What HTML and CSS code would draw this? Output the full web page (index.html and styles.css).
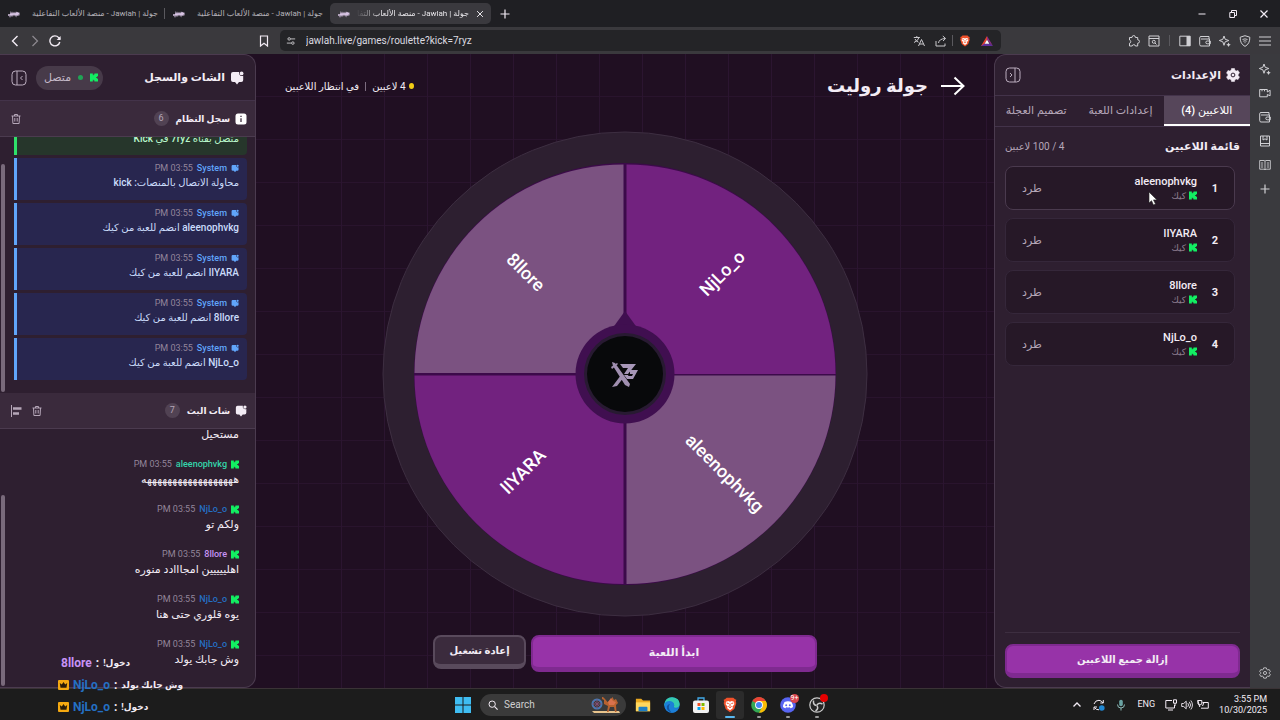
FILE: index.html
```html
<!DOCTYPE html>
<html lang="ar">
<head>
  <meta charset="UTF-8" />
  <meta name="viewport" content="width=device-width, initial-scale=1.0" />
  <title>جولة | Jawlah - منصة الألعاب التفاعلية</title>
  <link rel="stylesheet" href="styles.css">
</head>
<body>

<!-- icons -->
<svg class="sprite" aria-hidden="true">
  <symbol id="i-logo" viewBox="0 0 12 8"><path d="M0 5h2.500l.5-2 1 2.500L5 3l1 2 1-2 1 2.500L9 2l.5 3L11.500 4.500M1.500 6.500l1 .5M9.500 3l2 .5" fill="none" stroke="currentColor" stroke-width="1.300"/></symbol>
  <symbol id="i-kick" viewBox="0 0 9 9"><path d="M0 0h3.200v2H4V1h1V0h4v3H8v1H7v1h1v1h1v3H5V8H4V7h-.8v2H0z" fill="#12ee62"/></symbol>
  <symbol id="i-chat" viewBox="0 0 14 14"><path d="M3 1h6.200a3 3 0 0 0 4 3.800V9a2 2 0 0 1-2 2H9l-2 2.500L5 11H3a2 2 0 0 1-2-2V3a2 2 0 0 1 2-2z" fill="currentColor"/><circle cx="11.600" cy="2.400" r="1.900" fill="currentColor"/></symbol>
  <symbol id="i-info" viewBox="0 0 12 12"><rect x=".5" y=".5" width="11" height="11" rx="2.500" fill="#fff"/><path d="M6 5.200v3.800M6 2.800v1.200" stroke="#3a2a3c" stroke-width="1.300"/></symbol>
  <symbol id="i-trash" viewBox="0 0 12 12"><path d="M1.500 3h9M4.500 3V1.500h3V3M2.500 3l.4 7.500h6.200L9.500 3M4.800 5v3.500M7.200 5v3.500" fill="none" stroke="currentColor" stroke-width="1"/></symbol>
  <symbol id="i-align" viewBox="0 0 12 12"><path d="M1.500 0v12" stroke="currentColor"/><path d="M3 3.500h8.500M3 8.500h6" stroke="currentColor" stroke-width="2.600"/></symbol>
  <symbol id="i-panel" viewBox="0 0 16 16"><rect x="1" y="1" width="14" height="14" rx="3.500" fill="none" stroke="currentColor"/><path d="M6 1v14M11.500 6l-2 2 2 2" fill="none" stroke="currentColor"/></symbol>
  <symbol id="i-panel-r" viewBox="0 0 16 16"><rect x="1" y="1" width="14" height="14" rx="3.500" fill="none" stroke="currentColor"/><path d="M10 1v14M5 6l2 2-2 2" fill="none" stroke="currentColor"/></symbol>
  <symbol id="i-gear" viewBox="0 0 14 14"><path d="M5.500.5h3l.4 1.800 1.300.7 1.800-.6 1.500 2.600L12.200 6.300v1.400l1.300 1.300-1.500 2.600-1.800-.6-1.300.7-.4 1.800h-3l-.4-1.800-1.300-.7-1.800.6L.5 9l1.300-1.300V6.300L.5 5 2 2.400l1.800.6 1.300-.7z" fill="currentColor" stroke="currentColor" stroke-linejoin="round" stroke-width=".5"/><circle cx="7" cy="7" r="1.900" fill="none" stroke="#2e1f30"/></symbol>
  <symbol id="i-gear-o" viewBox="0 0 14 14"><path d="M5.500 1h3l.5 1.700 1.200.7 1.700-.4 1.300 2.300L12 6.500v1l1.200 1.200-1.300 2.300-1.700-.4-1.200.7L8.500 13h-3L5 11.300l-1.200-.7-1.700.4L.8 8.700 2 7.500v-1L.8 5.300 2.100 3l1.700.4L5 2.700z" fill="none" stroke="currentColor" stroke-linejoin="round"/><circle cx="7" cy="7" r="1.800" fill="none" stroke="currentColor"/></symbol>
  <symbol id="i-arrow" viewBox="0 0 24 20"><path d="M0 10h22M13.500 1.500L22.500 10l-9 8.500" fill="none" stroke="currentColor" stroke-width="2"/></symbol>
  <symbol id="i-left" viewBox="0 0 12 12"><path d="M8.500 1l-5 5 5 5" fill="none" stroke="currentColor" stroke-width="1.400"/></symbol>
  <symbol id="i-right" viewBox="0 0 12 12"><path d="M3.500 1l5 5-5 5" fill="none" stroke="currentColor" stroke-width="1.200"/></symbol>
  <symbol id="i-reload" viewBox="0 0 12 12"><path d="M10.800 7A5 5 0 1 1 9.700 2.600L11 4" fill="none" stroke="currentColor" stroke-width="1.400"/><path d="M11.600 1v4h-4z" fill="currentColor"/></symbol>
  <symbol id="i-mark" viewBox="0 0 12 12"><path d="M2.500 1h7v10L6 8.200 2.500 11z" fill="none" stroke="currentColor" stroke-width="1.200"/></symbol>
  <symbol id="i-tune" viewBox="0 0 12 12"><g fill="none" stroke="currentColor" stroke-width="1.100"><circle cx="3.800" cy="3.500" r="1.500"/><circle cx="8.200" cy="8.500" r="1.500"/><path d="M5.500 3.500H11M1 8.500h5.500"/></g></symbol>
  <symbol id="i-translate" viewBox="0 0 12 12"><path d="M.8 2.500h6M3.800 1v1.500M6 2.500Q5 6 1 7.500M2 4q1.200 2.400 3.500 3.200M5.500 11L8.500 4.500l3 6.500M6.500 9h4" fill="none" stroke="currentColor"/></symbol>
  <symbol id="i-share" viewBox="0 0 12 12"><path d="M1 6v5h9V8.500M3.500 8Q4 4 10 3.500M7.800 1l2.800 2.500L8 6" fill="none" stroke="currentColor"/></symbol>
  <symbol id="i-brave" viewBox="0 0 24 24"><path d="M7 1h10l2.500 2.500 2 .5-.8 3 .8 2-3 9L12 23l-6.500-5-3-9 .8-2-.8-3 2-.5z" fill="#f0512b"/><path d="M6 7l3.500-1L12 7l2.500-1L18 7l.5 4-3 3.500 1 2L12 20l-4.500-3.500 1-2L5.500 11z" fill="#fff"/><path d="M7 9l3 .8M17 9l-3 .8M12 10v4M9.500 14L12 16l2.500-2" stroke="#f0512b" stroke-width="1.500" fill="none"/></symbol>
  <symbol id="i-bat" viewBox="0 0 12 12"><path d="M6 1L0 11h6L3.800 8.500 6 5z" fill="#e2412e"/><path d="M6 1l6 10-2.500-2L6 5z" fill="#8b2d86"/><path d="M0 11h12L8.800 8.500H3.600z" fill="#5d2f9a"/><path d="M6 4.800l2.400 3.900H3.600z" fill="#fff"/></symbol>
  <symbol id="i-puzzle" viewBox="0 0 12 12"><path d="M1.500 2.500H4q0-2 1.700-2t1.700 2h2.300v2.300q1.800 0 1.800 1.700T9.700 8.200v2.800H7.400q0-1.300-1.600-1.300T4.200 11H1.500V8.200q1.300-.2 1.300-1.500T1.500 5z" fill="none" stroke="currentColor"/></symbol>
  <symbol id="i-find" viewBox="0 0 12 12"><path d="M1 1h10v10H1zM1 3.500h10" fill="none" stroke="currentColor"/><circle cx="5.800" cy="6.800" r="1.500" fill="none" stroke="currentColor"/><path d="M7 8l1.500 1.500" stroke="currentColor"/></symbol>
  <symbol id="i-side" viewBox="0 0 12 12"><path d="M.8 1.200h10.400v9.600H.8z" fill="none" stroke="currentColor"/><path d="M7.500 1h3.700v10H7.500z" fill="currentColor"/></symbol>
  <symbol id="i-wallet" viewBox="0 0 12 12"><path d="M10 4V1.500H2q-1.300 0-1.300 1.300V9.500Q.7 11 2 11h8.500V4H2M11.300 6H8.200q-1.400 0-1.400 1.400t1.400 1.400h3.100z" fill="none" stroke="currentColor"/></symbol>
  <symbol id="i-leo" viewBox="0 0 12 12"><path d="M5 1l1.200 3.300L9.800 5.500 6.200 6.800 5 10.300 3.800 6.800.3 5.500l3.500-1.200z" fill="none" stroke="currentColor"/><path d="M9.500 7.500l.8 1.500 1.500.7-1.500.8-.8 1.500-.7-1.500-1.500-.8 1.500-.7z" fill="currentColor"/></symbol>
  <symbol id="i-shield" viewBox="0 0 12 12"><path d="M6 .7l4.800 1.500q.3 6.500-4.800 9.200Q.9 8.700 1.200 2.200z" fill="none" stroke="currentColor"/><path d="M3.500 4.500q2.500-1.300 5 0M4.300 6.200q1.700-.9 3.400 0M5.500 7.700h1" fill="none" stroke="currentColor" stroke-width=".9"/></symbol>
  <symbol id="i-menu" viewBox="0 0 12 12"><path d="M0 2h12M0 6h12M0 10h12" stroke="currentColor" stroke-width="1.200"/></symbol>
  <symbol id="i-cam" viewBox="0 0 12 12"><path d="M.7 2.500h7.600V5l2.800-1.800v5.600L8.300 7.500v2.300H.7zM3 2.500v1.800M5.500 2.500v1.800" fill="none" stroke="currentColor"/></symbol>
  <symbol id="i-book" viewBox="0 0 12 12"><path d="M1.500 1h9v10h-9zM1.500 8.500h9M4 1v4l2-1.200L8 5V1" fill="none" stroke="currentColor"/></symbol>
  <symbol id="i-read" viewBox="0 0 12 12"><path d="M.7 1.500h4.500L6 2.200l.8-.7h4.500v8.700H6.800L6 11l-.8-.8H.7zM6 2v9M2 4h2.200M2 6h2.200M2 8h2.200M7.800 4H10M7.800 6H10M7.800 8H10" fill="none" stroke="currentColor" stroke-width=".9"/></symbol>
  <symbol id="i-plus" viewBox="0 0 12 12"><path d="M6 1.500v9M1.500 6h9" stroke="currentColor" stroke-width="1.200"/></symbol>
  <symbol id="i-min" viewBox="0 0 12 12"><path d="M2.500 6h7" stroke="currentColor"/></symbol>
  <symbol id="i-max" viewBox="0 0 12 12"><path d="M2.800 4.500h4.700v5H2.800zM4.500 4.500v-2h5v5h-2" fill="none" stroke="currentColor"/></symbol>
  <symbol id="i-x" viewBox="0 0 12 12"><path d="M2.500 2.500l7 7M9.500 2.500l-7 7" stroke="currentColor" stroke-width="1.200"/></symbol>
  <symbol id="i-crown" viewBox="0 0 11 10"><rect width="11" height="10" rx="1" fill="#f5a911"/><path d="M1.800 3l2 1.500L5.500 2l1.700 2.500 2-1.500-.7 4.800h-6z" fill="#2a1c08"/></symbol>
  <symbol id="i-win" viewBox="0 0 16 16"><path d="M0 0h7.500v7.500H0zM8.500 0H16v7.500H8.500zM0 8.500h7.500V16H0zM8.500 8.500H16V16H8.500z" fill="#3fbdf2"/></symbol>
  <symbol id="i-search" viewBox="0 0 12 12"><circle cx="5" cy="5" r="3.800" fill="none" stroke="currentColor" stroke-width="1.200"/><path d="M8 8l3.500 3.500" stroke="currentColor" stroke-width="1.400"/></symbol>
  <symbol id="i-camel" viewBox="0 0 30 17"><path d="M1 15h27l1 2H3z" fill="#e8c48d"/><circle cx="6" cy="8" r="4.500" fill="none" stroke="#477bb5" stroke-width="2"/><path d="M6 3v10M1 8h10M2.500 4.500l7 7M9.500 4.500l-7 7" stroke="#8b4f79" stroke-width=".8"/><path d="M14 3l-2-2h-1v2l2 1v4l4 2-1 6h1.500l1.500-5h4l1 5h1.500l-.5-7 2-2-2-4-2 1-1.500-3-3 4-2 1z" fill="#b7622f"/><path d="M17 6l3-4 2 3 3 1-2 3h-5z" fill="#d9724d"/></symbol>
  <symbol id="i-folder" viewBox="0 0 18 16"><path d="M1 1h6l2 2h8v12H1z" fill="#e9a820"/><path d="M1 5h16v10H1z" fill="#ffd75e"/><path d="M4 11q0-1 1-1h8q1 0 1 1v4H4z" fill="#1f7fc4"/></symbol>
  <symbol id="i-edge" viewBox="0 0 16 16"><circle cx="8" cy="8" r="7.700" fill="#1b78cf"/><path d="M.4 7Q1.500 0 8.300.2 15.500.8 15.700 7q-.2 3.800-4.200 3.700-2.500-.2-1.300-2Q10.200 5 6.500 5 2 5 .4 9z" fill="#35cbb0"/><path d="M.4 8Q1 3.800 6 4q4.200.6 4.200 4.700-1.500 1.300.3 2.500 2 .8 4 0-2.500 4.600-7 4.500Q.6 15 .4 8z" fill="#1c7fd8"/><path d="M6 7Q3 11 7.500 15.500 2.500 14 2.800 9.500 3.500 7 6 7z" fill="#1254a0"/></symbol>
  <symbol id="i-store" viewBox="0 0 16 16"><path d="M5 4V1h6v3" fill="none" stroke="#42a9e8" stroke-width="1.300"/><rect y="3.500" width="16" height="12.500" rx="2" fill="#f1f1f1"/><path d="M4.500 6h3v3h-3z" fill="#f25022"/><path d="M8.500 6h3v3h-3z" fill="#7fba00"/><path d="M4.500 10h3v3h-3z" fill="#00a4ef"/><path d="M8.500 10h3v3h-3z" fill="#ffb900"/></symbol>
  <symbol id="i-chrome" viewBox="0 0 16 16"><circle cx="8" cy="8" r="7.800" fill="#34a853"/><path d="M8 8L1.300 4A7.800 7.800 0 0 1 14.800 4z" fill="#ea4335"/><path d="M8 4h6.800A7.800 7.800 0 0 1 8 15.800l3.400-5.900z" fill="#fbbc05"/><circle cx="8" cy="8" r="3.900" fill="#fff"/><circle cx="8" cy="8" r="3" fill="#4285f4"/></symbol>
  <symbol id="i-discord" viewBox="0 0 16 16"><circle cx="8" cy="8" r="7.800" fill="#5865f2"/><path d="M4.500 5q3.500-1.500 7 0 1.500 2.500 1.500 5-1 1-2.500 1.300l-.6-1q-1.900.5-3.800 0l-.6 1Q4 11 3 10q0-2.500 1.500-5z" fill="#fff"/><circle cx="6.200" cy="8.300" r="1" fill="#5865f2"/><circle cx="9.800" cy="8.300" r="1" fill="#5865f2"/></symbol>
  <symbol id="i-obs" viewBox="0 0 16 16"><circle cx="8" cy="8" r="7.200" fill="#242424" stroke="#ccc" stroke-width="1.200"/><path d="M7.500 8.500Q4 8 4.500 3.500M8 8q2-3 5.500-1M8 8.500q2 3.500-1.500 5.500" fill="none" stroke="#ccc" stroke-width="1.500"/></symbol>
  <symbol id="i-up" viewBox="0 0 12 12"><path d="M2.500 7.500L6 4l3.500 3.500" fill="none" stroke="currentColor" stroke-width="1.300"/></symbol>
  <symbol id="i-sync" viewBox="0 0 12 12"><path d="M1 5Q2.500 1 6 1.300q2.500.2 4 2.700M10.300 1v3h-3M1 11V8h3M1.500 8.500q1.500 2.500 4.500 2.300" fill="none" stroke="currentColor"/><circle cx="8.800" cy="9" r="2.800" fill="#2188d4"/></symbol>
  <symbol id="i-mic" viewBox="0 0 12 12"><rect x="4.200" y=".7" width="3.600" height="6.500" rx="1.800" fill="#6aa3a3"/><path d="M2.500 5.500q0 3.500 3.500 3.500t3.500-3.500M6 9v2.500" fill="none" stroke="#8dbab8"/></symbol>
  <symbol id="i-net" viewBox="0 0 12 12"><path d="M7 1.500H.8V9h8.700V6M3 11h5M8.500.8h3v3.400h-3zM10 4.200V7" fill="none" stroke="currentColor"/></symbol>
  <symbol id="i-vol" viewBox="0 0 12 12"><path d="M.7 4.500h2l2.500-2.300v7.600L2.700 7.500h-2zM6.800 4.200q1.500 1.800 0 3.600M8.300 2.800q2.600 3.200 0 6.400M9.800 1.500q3.300 4.500 0 9" fill="none" stroke="currentColor" stroke-width=".9"/></symbol>
  <symbol id="i-power" viewBox="0 0 12 12"><path d="M5.500 3.500h5.800v5.700H4M.8 1.500l2 6.500M.8 1.500h4v3.500L3 6 1 5zM7 3.500L5.500 7" fill="none" stroke="currentColor"/></symbol>
</svg>

<div class="window">
  <div class="tab-strip">
    <button class="tab"><svg class="fav"><use href="#i-logo"/></svg><span dir="rtl">جولة | Jawlah - منصة الألعاب التفاعلية</span></button>
    <i class="sep"></i>
    <button class="tab"><svg class="fav"><use href="#i-logo"/></svg><span dir="rtl">جولة | Jawlah - منصة الألعاب التفاعلية</span></button>
    <button class="tab active"><svg class="fav"><use href="#i-logo"/></svg><span dir="rtl">جولة | Jawlah - منصة الألعاب التفا</span><svg class="icon-s"><use href="#i-x"/></svg></button>
    <button class="plain new-tab" aria-label="New tab"><svg class="icon"><use href="#i-plus"/></svg></button>
    <div class="win-buttons">
      <button class="plain" aria-label="Minimize"><svg class="icon"><use href="#i-min"/></svg></button>
      <button class="plain" aria-label="Restore"><svg class="icon"><use href="#i-max"/></svg></button>
      <button class="plain" aria-label="Close"><svg class="icon"><use href="#i-x"/></svg></button>
    </div>
  </div>

  <div class="toolbar">
    <div class="nav-buttons">
      <button class="plain" aria-label="Back"><svg class="icon"><use href="#i-left"/></svg></button>
      <button class="plain dim" aria-label="Forward"><svg class="icon"><use href="#i-right"/></svg></button>
      <button class="plain" aria-label="Reload"><svg class="icon"><use href="#i-reload"/></svg></button>
    </div>
    <button class="plain" aria-label="Bookmark"><svg class="icon"><use href="#i-mark"/></svg></button>
    <div class="address">
      <svg class="icon-s"><use href="#i-tune"/></svg>
      <input type="text" aria-label="Address" value="jawlah.live/games/roulette?kick=7ryz">
      <svg class="icon"><use href="#i-translate"/></svg>
      <svg class="icon"><use href="#i-share"/></svg>
      <div class="shields">
        <i class="sep"></i>
        <svg class="icon"><use href="#i-brave"/></svg>
      </div>
      <svg class="icon"><use href="#i-bat"/></svg>
    </div>
    <div class="tools">
      <button class="plain" aria-label="Extensions"><svg class="icon"><use href="#i-puzzle"/></svg></button>
      <button class="plain" aria-label="Search tabs"><svg class="icon"><use href="#i-find"/></svg></button>
      <i class="sep"></i>
      <button class="plain" aria-label="Sidebar"><svg class="icon"><use href="#i-side"/></svg></button>
      <button class="plain" aria-label="Wallet"><svg class="icon"><use href="#i-wallet"/></svg></button>
      <button class="plain" aria-label="Leo"><svg class="icon"><use href="#i-leo"/></svg></button>
      <button class="plain" aria-label="VPN"><svg class="icon"><use href="#i-shield"/></svg></button>
      <button class="plain" aria-label="Menu"><svg class="icon"><use href="#i-menu"/></svg></button>
    </div>
  </div>

  <div class="viewport">
    <div class="app" dir="rtl">

      <!-- الإعدادات -->
      <aside class="panel settings">
        <header class="panel-head settings-head">
          <svg class="icon-l"><use href="#i-gear"/></svg>
          <h2>الإعدادات</h2>
          <button class="plain end" aria-label="إغلاق"><svg class="icon-xl"><use href="#i-panel-r"/></svg></button>
        </header>
        <nav class="set-tabs">
          <button class="active">اللاعبين (4)</button>
          <button>إعدادات اللعبة</button>
          <button>تصميم العجلة</button>
        </nav>
        <div class="players">
          <div class="players-head"><h3>قائمة اللاعبين</h3><span>4 / 100 لاعبين</span></div>
          <ul>
            <li class="player hover">
              <b>1</b>
              <div><strong>aleenophvkg</strong><small><svg class="k"><use href="#i-kick"/></svg>كيك</small></div>
              <button>طرد</button>
              <svg class="cursor" viewBox="0 0 10 14"><path d="M1 0v11l2.500-2.300L5.500 13l2-.9-2-4.200H9z" fill="#fff" stroke="#222" stroke-width=".6"/></svg>
            </li>
            <li class="player">
              <b>2</b>
              <div><strong>lIYARA</strong><small><svg class="k"><use href="#i-kick"/></svg>كيك</small></div>
              <button>طرد</button>
            </li>
            <li class="player">
              <b>3</b>
              <div><strong>8llore</strong><small><svg class="k"><use href="#i-kick"/></svg>كيك</small></div>
              <button>طرد</button>
            </li>
            <li class="player">
              <b>4</b>
              <div><strong>NjLo_o</strong><small><svg class="k"><use href="#i-kick"/></svg>كيك</small></div>
              <button>طرد</button>
            </li>
          </ul>
        </div>
        <footer><button class="btn primary">إزالة جميع اللاعبين</button></footer>
      </aside>

      <!-- العجلة -->
      <main class="game">
        <header class="game-head">
          <a href="#" aria-label="رجوع"><svg class="arrow"><use href="#i-arrow"/></svg></a>
          <h1>جولة روليت</h1>
          <div class="status"><i class="dot"></i><span>4 لاعبين</span><i class="bar"></i><span>في انتظار اللاعبين</span></div>
        </header>
        <div class="wheel-box">
          <svg class="wheel" viewBox="0 0 486 486" direction="ltr">
            <circle cx="243" cy="243" r="242" fill="#2d1f30" stroke="#3d2e41"/>
            <circle cx="243" cy="243" r="211" fill="#3c0a4a"/>
            <path d="M244.500 243V33.500a209 209 0 0 1 209 209.500z" fill="#72227f"/>
            <path d="M244.500 244.500h209a209 209 0 0 1-209 208.500z" fill="#7b5281"/>
            <path d="M241.500 244.500v208.500a209 209 0 0 1-209-208.500z" fill="#72227f"/>
            <path d="M241.500 242v-208.500a209 209 0 0 0-209 208.500z" fill="#7b5281"/>
            <g class="names">
              <text transform="translate(340 142) rotate(-45)">NjLo_o</text>
              <text transform="translate(343 342) rotate(45)">aleenophvkg</text>
              <text transform="translate(141 340) rotate(-45)">lIYARA</text>
              <text transform="translate(144 141) rotate(45)">8llore</text>
            </g>
            <path d="M243 180l13 18h-26z" fill="#400f50"/>
            <circle cx="243" cy="243" r="49.500" fill="#400f50"/>
            <circle cx="243" cy="243" r="41" fill="#281a32"/>
            <circle cx="243" cy="243" r="38" fill="#08090b"/>
            <path d="M230 231l3 1 15 21-1 3-4-2-12-19zM229 236l6-4 1 1-6 5zM230 256l9-12 3 2-7 9z" fill="#a08fb0"/>
            <path d="M238 233h16l-8 10h-4l4-6h-5zM248 239h8l-5 9h-6l-3-4h6z" fill="#a797b8"/>
            <path d="M247 243h4l-1 2h-4z" fill="#08090b"/>
          </svg>
        </div>
        <div class="actions">
          <button class="btn primary start">ابدأ اللعبة</button>
          <button class="btn ghost">إعادة تشغيل</button>
        </div>
      </main>

      <!-- الشات والسجل -->
      <aside class="panel chat">
        <header class="panel-head">
          <svg class="icon-l"><use href="#i-chat"/></svg>
          <h2>الشات والسجل</h2>
          <span class="pill end"><svg class="k"><use href="#i-kick"/></svg><i></i>متصل</span>
          <button class="plain" aria-label="إغلاق"><svg class="icon-xl"><use href="#i-panel"/></svg></button>
        </header>
        <div class="sub-head">
          <svg class="icon"><use href="#i-info"/></svg>
          <h3>سجل النظام</h3>
          <span class="count">6</span>
          <button class="plain end" aria-label="مسح"><svg class="icon"><use href="#i-trash"/></svg></button>
        </div>
        <div class="feed log">
          <i class="scroll"></i>
          <div class="entry ok"><p>متصل بقناة 7ryz في Kick</p></div>
          <div class="entry"><div class="meta"><svg class="k"><use href="#i-chat"/></svg><b>System</b><time>03:55 PM</time></div><p>محاولة الاتصال بالمنصات: kick</p></div>
          <div class="entry"><div class="meta"><svg class="k"><use href="#i-chat"/></svg><b>System</b><time>03:55 PM</time></div><p>aleenophvkg انضم للعبة من كيك</p></div>
          <div class="entry"><div class="meta"><svg class="k"><use href="#i-chat"/></svg><b>System</b><time>03:55 PM</time></div><p>lIYARA انضم للعبة من كيك</p></div>
          <div class="entry"><div class="meta"><svg class="k"><use href="#i-chat"/></svg><b>System</b><time>03:55 PM</time></div><p>8llore انضم للعبة من كيك</p></div>
          <div class="entry"><div class="meta"><svg class="k"><use href="#i-chat"/></svg><b>System</b><time>03:55 PM</time></div><p>NjLo_o انضم للعبة من كيك</p></div>
        </div>
        <div class="sub-head">
          <svg class="icon"><use href="#i-chat"/></svg>
          <h3>شات البث</h3>
          <span class="count">7</span>
          <button class="plain end" aria-label="مسح"><svg class="icon"><use href="#i-trash"/></svg></button>
          <button class="plain" aria-label="محاذاة"><svg class="icon"><use href="#i-align"/></svg></button>
        </div>
        <div class="feed messages">
          <i class="scroll"></i>
          <div class="msg"><p>مستحيل</p></div>
          <div class="msg"><div class="meta"><svg class="k"><use href="#i-kick"/></svg><b class="teal">aleenophvkg</b><time>03:55 PM</time></div><p>ههههههههههههههههههه</p></div>
          <div class="msg"><div class="meta"><svg class="k"><use href="#i-kick"/></svg><b class="blue">NjLo_o</b><time>03:55 PM</time></div><p>ولكم تو</p></div>
          <div class="msg"><div class="meta"><svg class="k"><use href="#i-kick"/></svg><b class="violet">8llore</b><time>03:55 PM</time></div><p>اهلييييين امجااادد منوره</p></div>
          <div class="msg"><div class="meta"><svg class="k"><use href="#i-kick"/></svg><b class="blue">NjLo_o</b><time>03:55 PM</time></div><p>يوه قلوري حتى هنا</p></div>
          <div class="msg"><div class="meta"><svg class="k"><use href="#i-kick"/></svg><b class="blue">NjLo_o</b><time>03:55 PM</time></div><p>وش جابك يولد</p></div>
        </div>
      </aside>
    </div>

    <div class="sidebar">
      <button class="plain" aria-label="Leo"><svg class="icon"><use href="#i-leo"/></svg></button>
      <button class="plain" aria-label="Talk"><svg class="icon"><use href="#i-cam"/></svg></button>
      <button class="plain" aria-label="Wallet"><svg class="icon"><use href="#i-wallet"/></svg></button>
      <button class="plain" aria-label="Bookmarks"><svg class="icon"><use href="#i-book"/></svg></button>
      <button class="plain" aria-label="Reading list"><svg class="icon"><use href="#i-read"/></svg></button>
      <button class="plain" aria-label="Add"><svg class="icon"><use href="#i-plus"/></svg></button>
      <button class="plain last" aria-label="Settings"><svg class="icon"><use href="#i-gear-o"/></svg></button>
    </div>
  </div>

  <div class="taskbar">
    <div class="apps">
      <button class="plain" aria-label="Start"><svg class="app-icon"><use href="#i-win"/></svg></button>
      <label class="search"><svg class="icon-s"><use href="#i-search"/></svg><input type="text" placeholder="Search" aria-label="Search"><svg class="camel"><use href="#i-camel"/></svg></label>
      <button class="plain" aria-label="Files"><svg class="app-icon"><use href="#i-folder"/></svg></button>
      <button class="plain" aria-label="Edge"><svg class="app-icon"><use href="#i-edge"/></svg></button>
      <button class="plain" aria-label="Store"><svg class="app-icon"><use href="#i-store"/></svg></button>
      <button class="plain open focus" aria-label="Brave"><svg class="app-icon"><use href="#i-brave"/></svg></button>
      <button class="plain open" aria-label="Chrome"><svg class="app-icon"><use href="#i-chrome"/></svg></button>
      <button class="plain open" aria-label="Discord"><svg class="app-icon"><use href="#i-discord"/></svg><span class="badge">9+</span></button>
      <button class="plain open" aria-label="OBS"><svg class="app-icon"><use href="#i-obs"/></svg><span class="badge rec"></span></button>
    </div>
    <div class="tray">
      <svg class="icon"><use href="#i-up"/></svg>
      <svg class="icon"><use href="#i-sync"/></svg>
      <svg class="icon"><use href="#i-mic"/></svg>
      <span>ENG</span>
      <div class="tray-set">
        <svg class="icon"><use href="#i-net"/></svg>
        <svg class="icon"><use href="#i-vol"/></svg>
        <svg class="icon"><use href="#i-power"/></svg>
      </div>
      <div class="clock">3:55 PM<br>10/30/2025</div>
    </div>
  </div>

  <!-- stream chat overlay -->
  <div class="overlay">
    <div class="no-crown"><b class="violet">8llore</b><b>:</b><b class="ar" dir="rtl">دخول!</b></div>
    <div><svg><use href="#i-crown"/></svg><b class="blue">NjLo_o</b><b>:</b><b class="ar" dir="rtl">وش جابك يولد</b></div>
    <div><svg><use href="#i-crown"/></svg><b class="blue">NjLo_o</b><b>:</b><b class="ar" dir="rtl">دخول!</b></div>
  </div>
</div>

</body>
</html>
```
FILE: styles.css
```css
* { box-sizing: border-box; }
body {
  margin: 0;
  font-family: Roboto, "DejaVu Sans", sans-serif;
  font-size: 10px;
  color: #f3ecf5;
  background: #200f22;
  overflow: hidden;
}
h1, h2, h3, p, ul { margin: 0; padding: 0; }
ul { list-style: none; }
button, input { font: inherit; color: inherit; }
svg { display: block; flex: none; }
.sprite { position: absolute; width: 0; height: 0; }
.icon { width: 12px; height: 12px; }
.icon-s { width: 10px; height: 10px; }
.icon-l { width: 14px; height: 14px; }
.icon-xl { width: 16px; height: 16px; }
.k { width: 8px; height: 9px; }
.plain {
  display: flex;
  align-items: center;
  justify-content: center;
  padding: 0;
  border: 0;
  background: none;
  cursor: pointer;
}
.dim { opacity: 0.45; }
.end { margin-inline-start: auto; }
.teal { color: #34d6ab; }
.blue { color: #2470c4; }
.violet { color: #c793f5; }

.window {
  position: relative;
  display: flex;
  flex-direction: column;
  height: 100vh;
}

/* browser */
.tab-strip {
  display: flex;
  align-items: center;
  height: 27px;
  background: #1f1f23;
}
.tab {
  display: flex;
  align-items: center;
  gap: 6px;
  width: 164px;
  height: 21px;
  padding: 0 6px 0 8px;
  border: 0;
  background: none;
  color: #b4b1b8;
  font-size: 8px;
}
.tab span {
  flex: 1;
  text-align: start;
  white-space: nowrap;
}
.tab.active {
  width: 161px;
  margin-left: 1px;
  border-radius: 5px;
  background: #3a393e;
  color: #e8e6ea;
}
.tab.active span { -webkit-mask-image: linear-gradient(to right, transparent, #000 24px); }
.fav { width: 12px; height: 8px; color: #d8c4e4; }
.new-tab { width: 28px; }
.win-buttons {
  display: flex;
  gap: 19px;
  margin-left: auto;
  padding-right: 10px;
}
.toolbar {
  display: flex;
  align-items: center;
  height: 27px;
  padding-right: 9px;
  background: #3a393d;
}
.nav-buttons {
  display: flex;
  gap: 8px;
  width: 258px;
  padding-left: 9px;
}
.address {
  display: flex;
  flex: 1;
  align-items: center;
  gap: 10px;
  height: 21px;
  margin-left: 10px;
  padding: 0 8px 0 6px;
  border-radius: 5px;
  background: #242427;
  color: #c9c8cc;
}
.address input {
  flex: 1;
  min-width: 0;
  padding: 0;
  border: 0;
  outline: 0;
  background: none;
  color: #dcdbe0;
}
.shields {
  display: flex;
  align-items: center;
  gap: 6px;
  margin-left: -5px;
}
.tools {
  display: flex;
  align-items: center;
  gap: 8px;
  padding-left: 127px;
  color: #d0d0d4;
}
.tools .sep { margin: 0 1px; }
.sep { width: 1px; height: 11px; background: #5a595e; }
.viewport {
  display: flex;
  flex: 1;
  min-height: 0;
}
.sidebar {
  display: flex;
  flex-direction: column;
  gap: 12px;
  width: 30px;
  padding: 9px 0;
  background: #3a3a3e;
  color: #d0d0d4;
}
.sidebar .last { margin-top: auto; }

/* app */
.app {
  display: flex;
  flex: 1;
  min-width: 0;
}
.panel {
  display: flex;
  flex-direction: column;
  width: 256px;
  border: 1px solid #4b3b4f;
  border-radius: 0 12px 12px 0;
  background: #2e1f30;
  overflow: hidden;
}
.settings { border-right: 0; border-radius: 12px 0 0 12px; }
.chat { border-left: 0; }
.panel-head {
  display: flex;
  align-items: center;
  gap: 5px;
  height: 46px;
  padding: 0 11px;
  border-bottom: 1px solid #43334a;
}
.settings-head { height: 41px; padding: 0 10px; }
.panel-head h2 { font-size: 11px; }
.panel-head button { color: #bcaebf; }
.pill {
  display: flex;
  align-items: center;
  gap: 7px;
  height: 24px;
  margin-left: 4px;
  padding: 0 5px 0 8px;
  border-radius: 12px;
  background: #473a49;
  color: #c5b9c8;
  font-size: 11px;
}
.pill i { width: 5px; height: 5px; border-radius: 50%; background: #20a455; }
.sub-head {
  display: flex;
  flex: none;
  align-items: center;
  gap: 5px;
  height: 36px;
  padding: 0 8px;
  border-bottom: 1px solid #4b3b4f;
  background: #3a2a3c;
}
.sub-head h3 { font-size: 9px; }
.sub-head button { width: 16px; color: #b5a6b8; }
.count {
  width: 15px;
  height: 15px;
  margin-inline-start: 2px;
  border-radius: 50%;
  background: #514253;
  color: #b5a6b8;
  font-size: 9px;
  line-height: 15px;
  text-align: center;
}
.feed {
  position: relative;
  display: flex;
  flex-direction: column;
  justify-content: flex-end;
  min-height: 0;
  overflow: hidden;
}
.scroll {
  position: absolute;
  left: 1px;
  top: 27px;
  bottom: 1px;
  width: 4px;
  border-radius: 2px;
  background: #796a7b;
}
.log {
  flex: 1;
  gap: 3px;
  padding: 0 8px 13px 14px;
}
.entry {
  flex: none;
  height: 42px;
  padding: 3px 8px 0;
  border-left: 3px solid #60a5fa;
  border-radius: 0 4px 4px 0;
  background: #28264f;
  color: #cbdcfb;
}
.entry .meta { color: #60a5fa; }
.entry.ok {
  padding-top: 18px;
  border-color: #2fe06a;
  background: #26362b;
  color: #b9f7cb;
}
.meta {
  display: flex;
  align-items: center;
  gap: 4px;
  height: 14px;
  font-size: 9px;
}
.meta b { font-weight: 500; }
.meta time { color: #93859a; }
.feed p {
  font-size: 11px;
  font-weight: 500;
  line-height: 16px;
  white-space: nowrap;
}
.entry p { font-size: 10px; }
.messages {
  height: 258px;
  gap: 13px;
  padding: 0 16px 18px;
}
.messages .scroll { top: 66px; }
.msg { flex: none; }
.messages p { line-height: 18px; }

.game {
  display: flex;
  flex: 1;
  flex-direction: column;
  min-width: 0;
  padding: 14px 29px 16px;
  background:
    repeating-linear-gradient(to right, transparent 0 42px, #2b1530 42px 43px),
    repeating-linear-gradient(to bottom, #200f22 0 42px, #29142d 42px 43px);
}
.game-head {
  display: flex;
  align-items: center;
  gap: 13px;
  height: 36px;
}
.game-head a { color: #fff; }
.arrow { width: 24px; height: 20px; }
.game-head h1 { font-size: 18px; line-height: 36px; }
.status {
  display: flex;
  align-items: center;
  gap: 6px;
  margin-inline-start: auto;
  font-size: 10px;
}
.dot { width: 5px; height: 6px; margin-left: -3px; border-radius: 50%; background: #f2cc16; }
.bar { width: 1px; height: 9px; background: #7c6c80; }
.wheel-box {
  display: flex;
  flex: 1;
  justify-content: center;
  min-height: 0;
  padding: 27px 0 18px;
}
.wheel { height: 100%; max-width: 100%; }
.names text {
  fill: #fff;
  font-size: 18px;
  font-weight: 500;
  text-anchor: middle;
  dominant-baseline: central;
}
.actions {
  display: flex;
  justify-content: center;
  align-items: flex-start;
  gap: 5px;
}
.btn {
  border: 2px solid #7f2a90;
  border-radius: 8px;
  font-weight: 600;
  cursor: pointer;
}
.primary {
  height: 34px;
  border-bottom-width: 5px;
  background: #9733a8;
  font-size: 10px;
}
.primary.start { width: 286px; height: 37px; font-size: 11px; }
.ghost {
  width: 93px;
  height: 34px;
  padding: 0;
  border-color: #594a5c;
  border-bottom-width: 5px;
  background: #3b2b3d;
  font-size: 10px;
}

.set-tabs {
  display: grid;
  grid-template-columns: 86fr 86fr 82fr;
  height: 31px;
  border-bottom: 1px solid #43334a;
}
.set-tabs button {
  padding: 0;
  border: 0;
  border-bottom: 2px solid transparent;
  background: none;
  color: #b5a6b8;
  font-size: 11px;
  font-weight: 500;
  white-space: nowrap;
}
.set-tabs .active {
  border-color: #fff;
  background: #56465a;
  color: #fff;
}
.players { flex: 1; padding: 0 10px; }
.players-head {
  display: flex;
  align-items: center;
  justify-content: space-between;
  height: 39px;
  color: #b5a6b8;
}
.players-head h3 { color: #f3ecf5; font-size: 11px; }
.players ul {
  display: grid;
  gap: 8px;
  padding-right: 5px;
}
.player {
  position: relative;
  display: flex;
  align-items: center;
  height: 44px;
  padding: 0 16px;
  border: 1px solid #35273a;
  border-radius: 8px;
  background: #261827;
}
.player.hover { border-color: #4a3a4e; }
.player b { width: 21px; font-size: 11px; }
.player div { display: grid; gap: 1px; }
.player strong { font-size: 11px; font-weight: 500; line-height: 14px; }
.player small {
  display: flex;
  align-items: center;
  gap: 3px;
  color: #8e7f91;
  font-size: 9px;
  line-height: 12px;
}
.player button {
  margin-inline-start: auto;
  padding: 0;
  border: 0;
  background: none;
  color: #b5a6b8;
  font-size: 11px;
}
.cursor { position: absolute; left: 142px; top: 25px; width: 10px; height: 14px; }
.settings footer {
  margin: 0 10px;
  padding: 11px 0 9px;
  border-top: 1px solid #3d2e40;
}
.settings footer .btn { width: 100%; }

/* taskbar */
.taskbar {
  display: grid;
  grid-template-columns: 1fr auto 1fr;
  align-items: center;
  height: 32px;
  border-top: 1px solid #3a3336;
  background: #1c1c1c;
}
.apps {
  display: flex;
  grid-column: 2;
  align-items: center;
  gap: 1px;
}
.apps button { position: relative; width: 28px; height: 28px; }
.app-icon { width: 16px; height: 16px; }
.search {
  display: flex;
  align-items: center;
  gap: 6px;
  width: 146px;
  height: 22px;
  margin: 0 2px;
  padding: 0 5px 0 8px;
  border-radius: 11px;
  background: #3a3a3a;
}
.search input {
  flex: 1;
  width: 0;
  padding: 0;
  border: 0;
  outline: 0;
  background: none;
}
.search input::placeholder { color: #d0d0d0; }
.camel { width: 30px; height: 17px; }
.open::after {
  content: "";
  position: absolute;
  bottom: 1px;
  left: 12px;
  width: 4px;
  height: 2px;
  border-radius: 1px;
  background: #9a9a9a;
}
.focus { border-radius: 3px; background: #2b2b2b; }
.focus::after { left: 9px; width: 10px; background: #58b8f0; }
.badge {
  position: absolute;
  right: 3px;
  top: 3px;
  width: 9px;
  height: 9px;
  border-radius: 50%;
  background: #d8454d;
  color: #fff;
  font-size: 7px;
  line-height: 9px;
}
.rec { width: 8px; height: 8px; background: #e60000; }
.tray {
  display: flex;
  align-items: center;
  justify-content: flex-end;
  gap: 10px;
  padding-right: 13px;
  font-size: 9px;
  line-height: 11px;
}
.tray-set { display: flex; gap: 4px; }
.clock { text-align: right; white-space: nowrap; }

.overlay {
  position: absolute;
  left: 58px;
  bottom: 2px;
  font-size: 12px;
  line-height: 22px;
}
.overlay div { display: flex; align-items: center; gap: 4px; }
.overlay svg { width: 11px; height: 10px; }
.overlay .ar { font-size: 9px; }
.overlay .no-crown { padding-left: 3px; }
```
